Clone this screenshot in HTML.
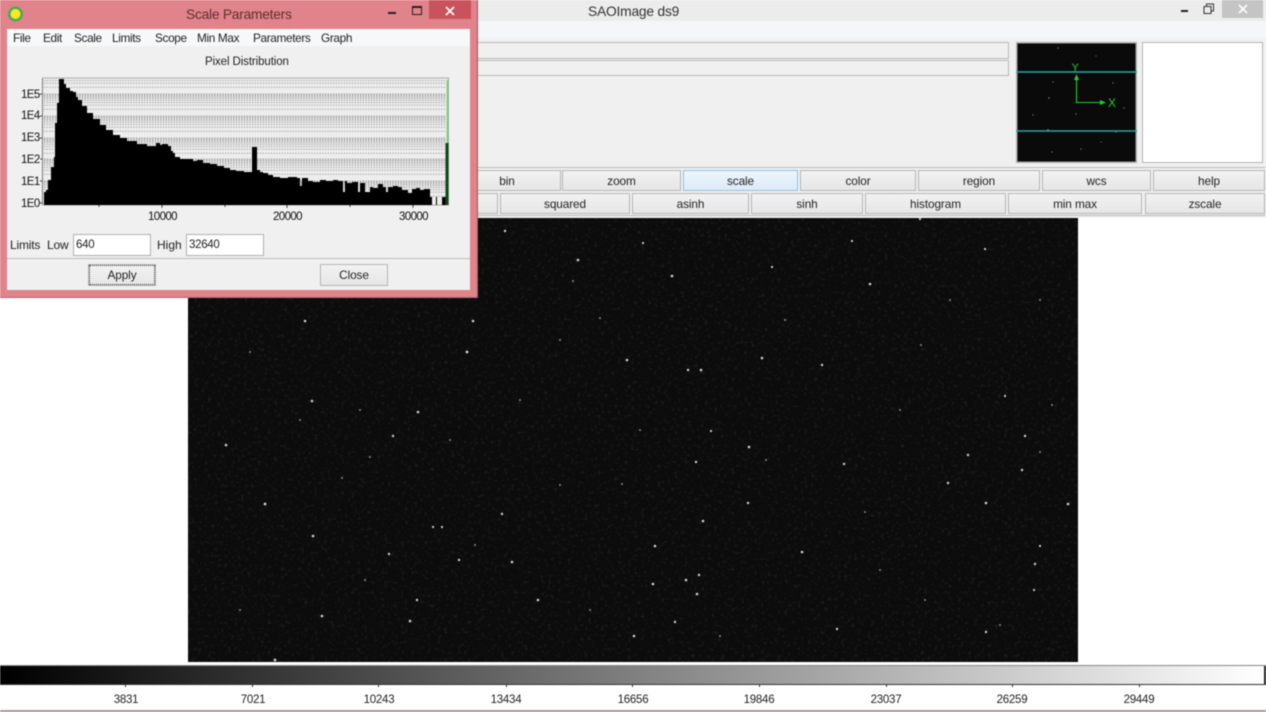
<!DOCTYPE html>
<html><head><meta charset="utf-8"><style>
html,body{margin:0;padding:0;width:1266px;height:712px;overflow:hidden;background:#fff}
#r{position:relative;width:1266px;height:712px;overflow:hidden;background:#fff;font-family:"Liberation Sans",sans-serif;font-size:12px;color:#222;filter:blur(.45px)}
#r div{position:absolute;box-sizing:border-box}
.b{height:21px;border:1px solid #b4b4b4;background:linear-gradient(#f2f2f2,#e6e6e6);text-align:center;line-height:21px;font-size:11.8px;letter-spacing:-.1px;color:#222}
.t{white-space:nowrap;line-height:14px}
.c{white-space:nowrap;width:60px;text-align:center;top:693px;font-size:11.5px;letter-spacing:-.25px;line-height:14px;color:#222}
.k{width:1px;height:3px;top:684px;background:#333}
.m{top:31px;white-space:nowrap;line-height:15px;font-size:11.8px;letter-spacing:-.35px;color:#222}
.a{font-size:11.5px;white-space:nowrap;color:#111;line-height:13px;letter-spacing:-.6px}
</style></head><body><div id="r">
<div style="left:0;top:0;width:1266px;height:21px;background:#ececec"></div>
<div style="left:0;top:21px;width:1266px;height:17px;background:#f5f6f7"></div>
<div style="left:0;top:38px;width:1266px;height:180px;background:#f0f0f0"></div>
<div class="t" style="left:588px;top:4px;font-size:13.8px;letter-spacing:-.2px;color:#333;line-height:16px">SAOImage ds9</div>
<div style="left:1181px;top:10px;width:7px;height:2px;background:#222"></div>
<svg style="position:absolute;left:1203px;top:3px" width="12" height="12"><path d="M1 3.500h7v7H1zM3.500 3V1h7v7H8" fill="none" stroke="#333"/></svg>
<div style="left:1222px;top:0;width:41px;height:18px;background:#c4c4c4"></div>
<svg style="position:absolute;left:1237px;top:3px" width="12" height="12"><path d="M2 2l8 8M10 2l-8 8" stroke="#fff" stroke-width="1.600"/></svg>
<div style="left:470px;top:42px;width:539px;height:17px;border:1px solid #b8b8b8;border-left:0;background:#f0f0f0"></div>
<div style="left:470px;top:60px;width:539px;height:16px;border:1px solid #b8b8b8;border-left:0;background:#f0f0f0"></div>
<svg style="position:absolute;left:1016px;top:42px" width="121" height="121">
<rect x=".75" y=".75" width="119.500" height="119.500" fill="#0a0a0a" stroke="#aaa" stroke-width="1.500"/>
<g fill="#999"><circle cx="33" cy="56" r=".7"/><circle cx="60" cy="72" r=".6"/><circle cx="97" cy="41" r=".6"/><circle cx="42" cy="6" r=".6"/><circle cx="32" cy="88" r=".7"/><circle cx="36" cy="110" r=".6"/><circle cx="100" cy="90" r=".6"/><circle cx="17" cy="73" r=".6"/><circle cx="108" cy="66" r=".6"/><circle cx="65" cy="107" r=".6"/><circle cx="37" cy="40" r=".6"/><circle cx="1" cy="21" r=".6"/><circle cx="80" cy="14" r=".5"/><circle cx="85" cy="100" r=".5"/></g>
<path d="M0 30H121M0 89H121" stroke="#2ea3a6" stroke-width="1.600"/>
<path d="M60.500 35V60.500H84" fill="none" stroke="#1fd02f" stroke-width="1.100"/>
<path d="M60.500 32l-2.500 6h5zM90 60.500l-6-2.500v5z" fill="#1fd02f"/>
<text x="55.500" y="29" font-size="11" fill="#1fd02f" font-family="Liberation Sans,sans-serif">Y</text>
<text x="92" y="65" font-size="12" fill="#1fd02f" font-family="Liberation Sans,sans-serif">X</text>
</svg>
<div style="left:1142px;top:42px;width:121px;height:121px;background:#fff;border:1px solid #b4b4b4"></div>
<div style="left:470px;top:167px;width:796px;height:1px;background:#bbb"></div>
<div style="left:470px;top:215px;width:796px;height:1px;background:#bbb"></div>
<div class="b" style="left:453px;top:170px;width:108px">bin</div>
<div class="b" style="left:562px;top:170px;width:119px">zoom</div>
<div class="b" style="left:683px;top:170px;width:115px;background:linear-gradient(#ecf5fc,#dcebf8);border-color:#8fbfe6">scale</div>
<div class="b" style="left:800px;top:170px;width:116px">color</div>
<div class="b" style="left:918px;top:170px;width:122px">region</div>
<div class="b" style="left:1042px;top:170px;width:109px">wcs</div>
<div class="b" style="left:1153px;top:170px;width:112px">help</div>
<div class="b" style="left:460px;top:193px;width:38px"></div>
<div class="b" style="left:500px;top:193px;width:130px">squared</div>
<div class="b" style="left:632px;top:193px;width:117px">asinh</div>
<div class="b" style="left:751px;top:193px;width:112px">sinh</div>
<div class="b" style="left:865px;top:193px;width:141px">histogram</div>
<div class="b" style="left:1008px;top:193px;width:134px">min max</div>
<div class="b" style="left:1145px;top:193px;width:120px">zscale</div>
<svg style="position:absolute;left:188px;top:218px" width="890" height="444">
<defs><filter id="n" x="0" y="0" width="100%" height="100%"><feTurbulence type="fractalNoise" baseFrequency=".3" numOctaves="2" seed="7"/><feColorMatrix values="0 0 0 0 .55 0 0 0 0 .55 0 0 0 0 .55 2.200 0 0 0 -1.200"/></filter></defs>
<rect width="890" height="444" fill="#0c0c0c"/>
<rect width="890" height="444" filter="url(#n)" opacity=".14"/>
<g fill="#d2d2d2" transform="translate(-188 -218)">
<circle cx="505" cy="231" r="1.200"/><circle cx="578" cy="260" r="1.300"/><circle cx="672" cy="276" r="1.300"/><circle cx="870" cy="284" r="1.300"/><circle cx="305" cy="321" r="1.300"/><circle cx="473" cy="321" r="1.300"/><circle cx="467" cy="352" r="1.400"/><circle cx="627" cy="360" r="1.300"/><circle cx="762" cy="358" r="1.300"/><circle cx="688" cy="370" r="1.200"/><circle cx="701" cy="370" r="1.300"/><circle cx="822" cy="365" r="1.200"/><circle cx="312" cy="401" r="1.300"/><circle cx="418" cy="412" r="1.300"/><circle cx="393" cy="436" r="1.200"/><circle cx="226" cy="445" r="1.300"/><circle cx="711" cy="431" r="1.100"/><circle cx="749" cy="447" r="1.300"/><circle cx="844" cy="464" r="1.200"/><circle cx="696" cy="462" r="1.200"/><circle cx="968" cy="455" r="1.200"/><circle cx="1025" cy="436" r="1.200"/><circle cx="1022" cy="470" r="1.200"/><circle cx="948" cy="483" r="1.200"/><circle cx="265" cy="504" r="1.400"/><circle cx="502" cy="514" r="1.200"/><circle cx="703" cy="521" r="1.300"/><circle cx="748" cy="503" r="1.200"/><circle cx="986" cy="503" r="1.300"/><circle cx="1068" cy="504" r="1.300"/><circle cx="313" cy="536" r="1.300"/><circle cx="433" cy="527" r="1.100"/><circle cx="442" cy="527" r="1.100"/><circle cx="655" cy="546" r="1.300"/><circle cx="802" cy="552" r="1.300"/><circle cx="389" cy="554" r="1.200"/><circle cx="459" cy="560" r="1.200"/><circle cx="512" cy="562" r="1.300"/><circle cx="1035" cy="564" r="1.200"/><circle cx="1040" cy="546" r="1.100"/><circle cx="653" cy="584" r="1.300"/><circle cx="686" cy="580" r="1.300"/><circle cx="699" cy="575" r="1.200"/><circle cx="697" cy="594" r="1.300"/><circle cx="538" cy="600" r="1.300"/><circle cx="417" cy="600" r="1.200"/><circle cx="322" cy="616" r="1.300"/><circle cx="410" cy="621" r="1.300"/><circle cx="675" cy="622" r="1.200"/><circle cx="634" cy="636" r="1.300"/><circle cx="837" cy="629" r="1.200"/><circle cx="986" cy="632" r="1.200"/><circle cx="275" cy="660" r="1.400"/><circle cx="852" cy="241" r="1.100"/><circle cx="985" cy="249" r="1.100"/><circle cx="920" cy="219" r="1.100"/><circle cx="643" cy="243" r="1.100"/><circle cx="772" cy="267" r="1.100"/><circle cx="1005" cy="396" r="1.100"/><circle cx="1034" cy="590" r="1.100"/></g>
<g fill="#888" transform="translate(-188 -218)"><circle cx="573" cy="281" r="1"/><circle cx="600" cy="318" r="1"/><circle cx="785" cy="320" r="1"/><circle cx="921" cy="345" r="1"/><circle cx="1052" cy="405" r="1"/><circle cx="865" cy="512" r="1"/><circle cx="560" cy="485" r="1"/><circle cx="622" cy="484" r="1"/><circle cx="766" cy="460" r="1"/><circle cx="1040" cy="452" r="1"/><circle cx="720" cy="636" r="1"/><circle cx="925" cy="600" r="1"/><circle cx="475" cy="545" r="1"/><circle cx="240" cy="610" r="1"/><circle cx="365" cy="580" r="1"/><circle cx="1000" cy="625" r="1"/><circle cx="360" cy="410" r="1"/><circle cx="250" cy="352" r="1"/><circle cx="370" cy="457" r="1"/><circle cx="342" cy="478" r="1"/><circle cx="300" cy="420" r="1"/><circle cx="450" cy="440" r="1"/><circle cx="520" cy="400" r="1"/><circle cx="560" cy="340" r="1"/><circle cx="640" cy="430" r="1"/><circle cx="900" cy="410" r="1"/><circle cx="950" cy="300" r="1"/><circle cx="1040" cy="300" r="1"/><circle cx="880" cy="570" r="1"/><circle cx="590" cy="610" r="1"/></g></svg>
<div style="left:0;top:666px;width:1266px;height:19px;border-right:2px solid #222;border-bottom:1px solid #333;background:linear-gradient(90deg,#000,#fff)"></div>
<div style="left:0;top:665px;width:1266px;height:1px;background:#888"></div>
<div class="k" style="left:125px"></div><div class="k" style="left:252px"></div><div class="k" style="left:378px"></div><div class="k" style="left:506px"></div><div class="k" style="left:632px"></div><div class="k" style="left:759px"></div><div class="k" style="left:886px"></div><div class="k" style="left:1012px"></div><div class="k" style="left:1139px"></div>
<div class="c" style="left:96px">3831</div><div class="c" style="left:223px">7021</div><div class="c" style="left:349px">10243</div><div class="c" style="left:476px">13434</div><div class="c" style="left:603px">16656</div><div class="c" style="left:729px">19846</div><div class="c" style="left:856px">23037</div><div class="c" style="left:982px">26259</div><div class="c" style="left:1109px">29449</div>
<div style="left:0;top:710px;width:1266px;height:2px;background:#b89090"></div>
<div style="left:0;top:0;width:478px;height:298px;background:#e0838a;border-right:1px solid #9c5a60;border-bottom:1px solid #a96a70"></div>
<svg style="position:absolute;left:6px;top:4px" width="20" height="20"><circle cx="9.500" cy="10" r="7.500" fill="#4fa85a"/><circle cx="9.500" cy="10" r="5" fill="#f2ee1c"/></svg>
<div class="t" style="left:186px;top:6px;font-size:13.800px;letter-spacing:-.25px;color:#5c3034;line-height:17px">Scale Parameters</div>
<div style="left:388px;top:12px;width:8px;height:2px;background:#222"></div>
<div style="left:412px;top:6px;width:10px;height:9px;border:1px solid #222;border-top:2px solid #222"></div>
<div style="left:429px;top:0;width:42px;height:19px;background:#c9535c"></div>
<svg style="position:absolute;left:444px;top:5px" width="12" height="12"><path d="M2 2l8 8M10 2l-8 8" stroke="#fff" stroke-width="1.600"/></svg>
<div style="left:7px;top:29px;width:463px;height:261px;background:#f0f0f0"></div>
<div style="left:7px;top:29px;width:463px;height:17px;background:#f7f8f9"></div>
<div class="m" style="left:13px">File</div><div class="m" style="left:43px">Edit</div><div class="m" style="left:74px">Scale</div><div class="m" style="left:112px">Limits</div><div class="m" style="left:155px">Scope</div><div class="m" style="left:197px">Min Max</div><div class="m" style="left:253px">Parameters</div><div class="m" style="left:321px">Graph</div>
<div class="t" style="left:205px;top:55px;font-size:11.500px;letter-spacing:-.1px">Pixel Distribution</div>
<svg style="position:absolute;left:0;top:0" width="478" height="298">
<rect x="42.500" y="78" width="406" height="127" fill="#ededed" stroke="#aaa"/>
<path fill="none" stroke="#a8a8a8" stroke-dasharray="1.500 1.200" d="M44 80.600H446M44 83.300H446M44 87.200H446M44 94H446M44 95H446M44 96.100H446M44 97.400H446M44 98.800H446M44 100.500H446M44 102.600H446M44 105.300H446M44 109.200H446M44 116H446M44 117H446M44 118.100H446M44 119.400H446M44 120.800H446M44 122.500H446M44 124.600H446M44 127.300H446M44 131.200H446M44 138H446M44 139H446M44 140.100H446M44 141.400H446M44 142.800H446M44 144.500H446M44 146.600H446M44 149.300H446M44 153.200H446M44 159H446M44 160H446M44 161.100H446M44 162.400H446M44 163.800H446M44 165.500H446M44 167.600H446M44 170.300H446M44 174.200H446M44 181H446M44 182H446M44 183.100H446M44 184.400H446M44 185.800H446M44 187.500H446M44 189.600H446M44 192.300H446M44 196.200H446"/>
<path fill="#000" d="M44 205V192H46V190H48V180H51V167H54V157H55V123H57V103H59V79H64V84H66V88H70V91H73V92H76V97H78V100H82V106H87V113H93V119H100V125H106V130H113V135H120V138H127V141H137V144H147V146H156V143H160V145H162V144H168V146H171V151H173V153H175V157H180V159H193V161H197V160H203V163H210V164H217V166H224V168H230V170H236V171H244V172H250V172H252V147H257V170H260V172H263V173H268V175H273V177H280V178H288V177H297V178H300V186H302V178H308V181H313V182H320V180H326V181H333V180H338V181H343V192H345V181H347V183H352V182H358V192H360V183H365V192H370V187H373V188H378V184H383V187H386V192H388V187H393V186H398V187H402V190H408V193H412V189H416V188H420V190H424V189H430V197H432V205H436V197H437V205H442V197H446V205Z"/>
<rect x="446.500" y="80" width="1.500" height="64" fill="#6fdc6f"/><rect x="445.500" y="143" width="3" height="62" fill="#0c4a14"/>
<path d="M42 94h-2M42 116h-2M42 138h-2M42 159h-2M42 181h-2M42 203h-2M162 205v3M287 205v3M413 205v3M99 205v2M225 205v2M350 205v2" stroke="#444"/>
<path d="M42.500 79V205" stroke="#444" stroke-dasharray="1 1"/>
</svg>
<div class="a" style="left:21px;top:89px">1E5</div><div class="a" style="left:21px;top:110px">1E4</div><div class="a" style="left:21px;top:132px">1E3</div><div class="a" style="left:21px;top:154px">1E2</div><div class="a" style="left:21px;top:176px">1E1</div><div class="a" style="left:21px;top:198px">1E0</div>
<div class="a" style="left:148px;top:211px">10000</div><div class="a" style="left:273px;top:211px">20000</div><div class="a" style="left:399px;top:211px">30000</div>
<div class="t" style="left:10px;top:238px;letter-spacing:-.2px">Limits</div><div class="t" style="left:47px;top:238px;letter-spacing:-.2px">Low</div>
<div style="left:73px;top:234px;width:78px;height:22px;background:#fff;border:1px solid #b0b0b0;padding:3px 2px;font-size:11.500px;letter-spacing:-.3px;line-height:14px">640</div>
<div class="t" style="left:157px;top:238px">High</div>
<div style="left:186px;top:234px;width:78px;height:22px;background:#fff;border:1px solid #b0b0b0;padding:3px 2px;font-size:11.500px;letter-spacing:-.3px;line-height:14px">32640</div>
<div style="left:7px;top:258px;width:463px;height:1px;background:#bbb"></div>
<div class="b" style="left:88px;top:264px;width:68px;height:22px;line-height:20px;outline:1px dotted #333;outline-offset:-2px">Apply</div>
<div class="b" style="left:320px;top:264px;width:68px;height:22px;line-height:20px">Close</div>
</div></body></html>
